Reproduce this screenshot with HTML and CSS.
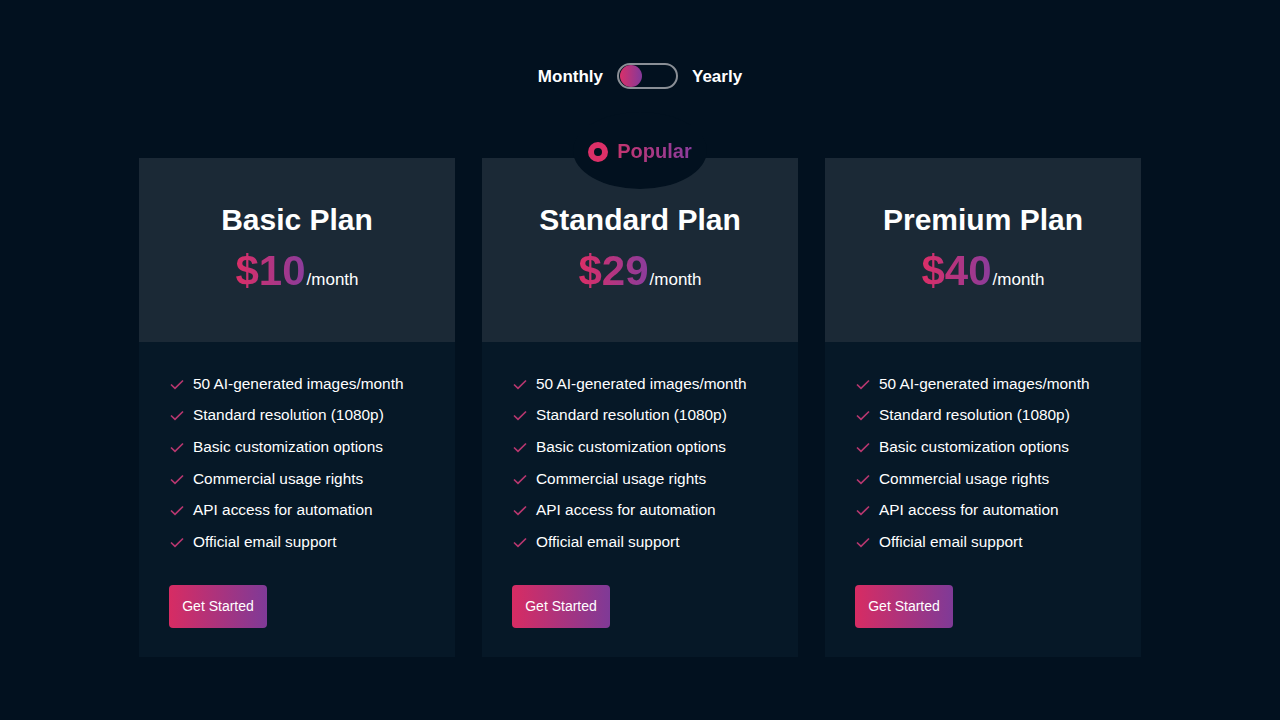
FILE: index.html
```html
<!DOCTYPE html>
<html>
<head>
<meta charset="utf-8">
<link rel="stylesheet" href="styles.css">
</head>
<body>
<div class="page">
  <div class="toggle-row">
    <span class="toggle-label">Monthly</span>
    <span class="switch"><span class="knob"></span></span>
    <span class="toggle-label">Yearly</span>
  </div>
  <div class="cards">
    <div class="card">
      <div class="card-head">
        <h2 class="plan">Basic Plan</h2>
        <div class="price"><span class="amount">$10</span><span class="per">/month</span></div>
      </div>
      <div class="card-body">
        <ul class="features">
          <li><svg class="check" viewBox="0 0 16 16"><path d="M2 8.5l4 3.8L14 4.5"/></svg>50 AI-generated images/month</li>
          <li><svg class="check" viewBox="0 0 16 16"><path d="M2 8.5l4 3.8L14 4.5"/></svg>Standard resolution (1080p)</li>
          <li><svg class="check" viewBox="0 0 16 16"><path d="M2 8.5l4 3.8L14 4.5"/></svg>Basic customization options</li>
          <li><svg class="check" viewBox="0 0 16 16"><path d="M2 8.5l4 3.8L14 4.5"/></svg>Commercial usage rights</li>
          <li><svg class="check" viewBox="0 0 16 16"><path d="M2 8.5l4 3.8L14 4.5"/></svg>API access for automation</li>
          <li><svg class="check" viewBox="0 0 16 16"><path d="M2 8.5l4 3.8L14 4.5"/></svg>Official email support</li>
        </ul>
        <button class="btn">Get Started</button>
      </div>
    </div>
    <div class="card popular">
      <div class="badge"><span class="dot"></span><span class="badge-text">Popular</span></div>
      <div class="card-head">
        <h2 class="plan">Standard Plan</h2>
        <div class="price"><span class="amount">$29</span><span class="per">/month</span></div>
      </div>
      <div class="card-body">
        <ul class="features">
          <li><svg class="check" viewBox="0 0 16 16"><path d="M2 8.5l4 3.8L14 4.5"/></svg>50 AI-generated images/month</li>
          <li><svg class="check" viewBox="0 0 16 16"><path d="M2 8.5l4 3.8L14 4.5"/></svg>Standard resolution (1080p)</li>
          <li><svg class="check" viewBox="0 0 16 16"><path d="M2 8.5l4 3.8L14 4.5"/></svg>Basic customization options</li>
          <li><svg class="check" viewBox="0 0 16 16"><path d="M2 8.5l4 3.8L14 4.5"/></svg>Commercial usage rights</li>
          <li><svg class="check" viewBox="0 0 16 16"><path d="M2 8.5l4 3.8L14 4.5"/></svg>API access for automation</li>
          <li><svg class="check" viewBox="0 0 16 16"><path d="M2 8.5l4 3.8L14 4.5"/></svg>Official email support</li>
        </ul>
        <button class="btn">Get Started</button>
      </div>
    </div>
    <div class="card">
      <div class="card-head">
        <h2 class="plan">Premium Plan</h2>
        <div class="price"><span class="amount">$40</span><span class="per">/month</span></div>
      </div>
      <div class="card-body">
        <ul class="features">
          <li><svg class="check" viewBox="0 0 16 16"><path d="M2 8.5l4 3.8L14 4.5"/></svg>50 AI-generated images/month</li>
          <li><svg class="check" viewBox="0 0 16 16"><path d="M2 8.5l4 3.8L14 4.5"/></svg>Standard resolution (1080p)</li>
          <li><svg class="check" viewBox="0 0 16 16"><path d="M2 8.5l4 3.8L14 4.5"/></svg>Basic customization options</li>
          <li><svg class="check" viewBox="0 0 16 16"><path d="M2 8.5l4 3.8L14 4.5"/></svg>Commercial usage rights</li>
          <li><svg class="check" viewBox="0 0 16 16"><path d="M2 8.5l4 3.8L14 4.5"/></svg>API access for automation</li>
          <li><svg class="check" viewBox="0 0 16 16"><path d="M2 8.5l4 3.8L14 4.5"/></svg>Official email support</li>
        </ul>
        <button class="btn">Get Started</button>
      </div>
    </div>
  </div>
</div>
</body>
</html>
```
FILE: styles.css
```css
* { box-sizing: border-box; }
html, body { margin: 0; padding: 0; }
body {
  background: #02111f;
  font-family: "Liberation Sans", Arial, sans-serif;
  color: #ffffff;
  width: 1280px;
  height: 720px;
  overflow: hidden;
}
.page {
  display: flex;
  flex-direction: column;
  align-items: center;
  padding-top: 63px;
}
.toggle-row {
  display: flex;
  align-items: center;
  gap: 14px;
  height: 26px;
  padding-top: 1px;
}
.toggle-label {
  font-size: 17px;
  font-weight: bold;
}
.switch {
  width: 61px;
  height: 26px;
  border: 2px solid #8a8f96;
  border-radius: 13px;
  display: flex;
  align-items: center;
  padding-left: 1px;
  margin-top: -1px;
}
.knob {
  width: 22px;
  height: 22px;
  border-radius: 50%;
  background: linear-gradient(90deg, #d9306a, #83399a);
}
.cards {
  display: flex;
  gap: 27px;
  margin-top: 69px;
}
.card {
  width: 316px;
  position: relative;
  display: flex;
  flex-direction: column;
}
.card-head {
  background: #1b2936;
  height: 184px;
  display: flex;
  flex-direction: column;
  align-items: center;
  padding-top: 45px;
}
.plan {
  margin: 0;
  font-size: 30px;
  font-weight: bold;
  line-height: 34px;
}
.price {
  margin-top: 10px;
  display: flex;
  align-items: baseline;
}
.amount {
  font-size: 42px;
  font-weight: bold;
  line-height: 48px;
  background: linear-gradient(90deg, #dc2e66, #8a3c9c);
  -webkit-background-clip: text;
  background-clip: text;
  color: transparent;
}
.per {
  font-size: 17px;
  margin-left: 1px;
}
.card-body {
  background: #061827;
  height: 315px;
  padding: 26px 30px 0 30px;
}
.features {
  list-style: none;
  margin: 0;
  padding: 0;
}
.features li {
  display: flex;
  align-items: center;
  height: 31.6px;
  font-size: 15.4px;
}
.check {
  width: 16px;
  height: 16px;
  margin-right: 8px;
  fill: none;
  stroke: #b7376f;
  stroke-width: 1.7;
}
.btn {
  margin-top: 27px;
  width: 98px;
  height: 43px;
  border: none;
  border-radius: 4px;
  background: linear-gradient(90deg, #d72c63, #7f3a97);
  color: #ffffff;
  font-family: "Liberation Sans", Arial, sans-serif;
  font-size: 14px;
  padding: 0;
}
.badge {
  position: absolute;
  left: 50%;
  top: -46px;
  transform: translateX(-50%);
  width: 134px;
  height: 77px;
  border-radius: 50%;
  background: #02111f;
  display: flex;
  align-items: center;
  justify-content: center;
  gap: 9px;
  padding-top: 2px;
  z-index: 2;
}
.dot {
  width: 20px;
  height: 20px;
  border-radius: 50%;
  border: 6px solid #dc3068;
  background: #02111f;
}
.badge-text {
  font-size: 20px;
  font-weight: bold;
  background: linear-gradient(90deg, #c4356f, #8a3c9c);
  -webkit-background-clip: text;
  background-clip: text;
  color: transparent;
}
```
